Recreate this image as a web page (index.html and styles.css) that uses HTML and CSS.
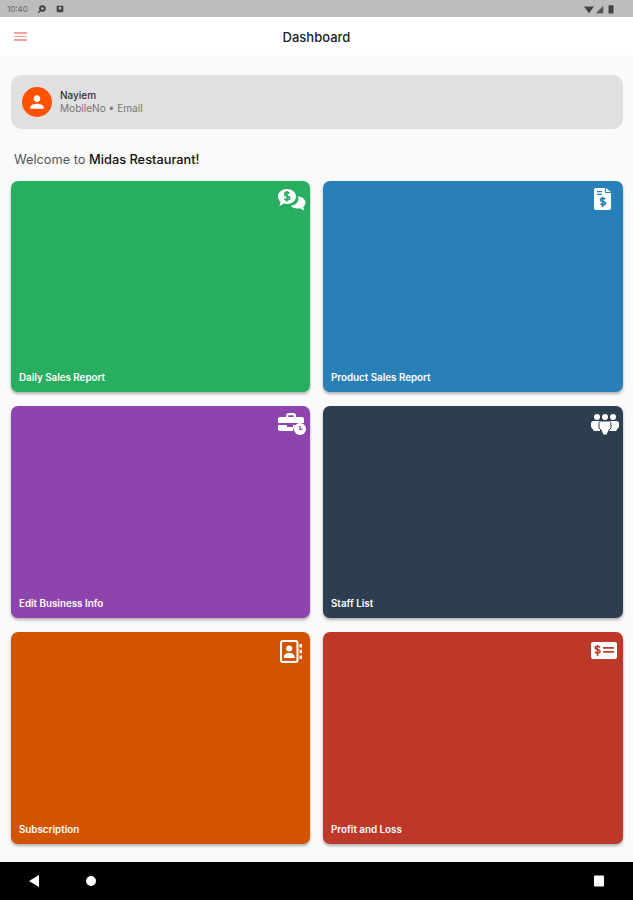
FILE: index.html
```html
<!DOCTYPE html>
<html lang="en">
<head>
    <meta charset="UTF-8">
    <meta name="viewport" content="width=device-width, initial-scale=1.0">
    <title>Dashboard</title>

    <link rel="stylesheet" href="styles.css">
</head>
<body>
    <div class="status-bar">
        <div class="status-left">
            <span class="status-time">10:40</span>
            <svg class="status-icon" viewBox="0 0 12 12"><circle cx="6.5" cy="5.5" r="4" fill="#444"/><circle cx="6.5" cy="5.5" r="1.5" fill="#bdbdbd"/><path d="M1 10l3-3 1 1-3 3z" fill="#444"/></svg>
            <svg class="status-icon" viewBox="0 0 12 12"><rect x="2" y="2" width="8" height="8" rx="1" fill="#444"/><rect x="4.5" y="3.5" width="3" height="3" fill="#bdbdbd"/></svg>
        </div>
        <div class="status-right">
            <svg class="status-icon" viewBox="0 0 12 12"><path d="M0 3h12L6 11z" fill="#444"/></svg>
            <svg class="status-icon" viewBox="0 0 12 12"><path d="M1 11L10 2v9z" fill="#555"/></svg>
            <svg class="status-icon" viewBox="0 0 12 12"><rect x="3" y="1.500" width="6" height="10" rx="1" fill="#444"/></svg>
        </div>
    </div>

    <header class="top-bar">
        <div class="menu-btn">
            <span></span>
            <span></span>
            <span></span>
        </div>
        <h1>Dashboard</h1>
    </header>

    <main class="content">
        <div class="user-card">
            <div class="avatar">
                <svg viewBox="0 0 24 24" width="16" height="16"><path fill="#fff" d="M12 12c2.800 0 5-2.200 5-5s-2.200-5-5-5-5 2.200-5 5 2.200 5 5 5zm0 2.500c-3.300 0-10 1.700-10 5V22h20v-2.500c0-3.300-6.700-5-10-5z"/></svg>
            </div>
            <div class="user-info">
                <div class="user-name">Nayiem</div>
                <div class="user-meta">MobileNo • Email</div>
            </div>
        </div>

        <p class="welcome">Welcome to <strong>Midas Restaurant!</strong></p>

        <div class="tile-grid">
            <div class="tile tile-green">
                <svg class="tile-icon icon-chat" width="30" height="24" viewBox="0 0 30 24">
                    <path fill="#fff" d="M10 1c5 0 9 3.200 9 7.500S15 16 10 16c-1 0-2-.1-3-.4L2.500 18l1-4C1.800 12.600 1 10.700 1 8.500 1 4.200 5 1 10 1z"/>
                    <path fill="#fff" d="M20.500 8.500c4.500 0 8 2.700 8 6 0 1.700-.8 3.200-2.200 4.300l.9 3.700-4.200-2.300c-.8.200-1.600.3-2.500.3-2.800 0-5.500-1-6.800-2.800 4.500-.3 7.800-3.400 7.800-7.200z"/>
                    <path fill="none" stroke="#27ae60" stroke-width="1.700" d="M12.500 5.500C12 4.700 11 4.300 10 4.300c-1.300 0-2.400.7-2.400 1.900 0 2.600 5 1.300 5 3.900 0 1.200-1.200 1.900-2.600 1.900-1.100 0-2.100-.5-2.600-1.300M10 3v10.500"/>
                </svg>
                <span class="tile-label">Daily Sales Report</span>
            </div>
            <div class="tile tile-blue">
                <svg class="tile-icon icon-doc" width="17" height="22" viewBox="0 0 17 22">
                    <path fill="#fff" d="M2 0h9v5h6v15a2 2 0 0 1-2 2H2a2 2 0 0 1-2-2V2a2 2 0 0 1 2-2z"/>
                    <path fill="#fff" d="M12 0l5 4h-5z"/>
                    <path fill="#2980b9" d="M3 3h5v1.300H3zM3 5.800h5v1.300H3z"/>
                    <path fill="none" stroke="#2980b9" stroke-width="1.700" d="M11.300 11.300c-.5-.7-1.400-1-2.500-1-1.400 0-2.300.6-2.300 1.600 0 2.200 5 1 5 3.300 0 1-1.100 1.600-2.500 1.600-1.100 0-2.100-.4-2.600-1.100M8.700 8.700v10.300"/>
                </svg>
                <span class="tile-label">Product Sales Report</span>
            </div>
            <div class="tile tile-purple">
                <svg class="tile-icon" width="28" height="22" viewBox="0 0 28 22">
                    <path fill="#fff" d="M8 4V2.500C8 1.100 9.100 0 10.500 0h5C16.900 0 18 1.100 18 2.500V4h6c1.100 0 2 .9 2 2v4H0V6c0-1.100.9-2 2-2h6zm2.200-1.800V4h5.600V2.200z"/>
                    <path fill="#fff" d="M0 12h9v2h6v-2h3.500c-2 1.300-3.300 3.500-3.300 6H2c-1.100 0-2-.9-2-2z"/>
                    <circle cx="22" cy="16" r="6" fill="#fff"/>
                    <path fill="none" stroke="#8e44ad" stroke-width="1.300" d="M22 13v3.300h2.500"/>
                </svg>
                <span class="tile-label">Edit Business Info</span>
            </div>
            <div class="tile tile-navy">
                <svg class="tile-icon" width="28" height="22" viewBox="0 0 28 22">
                    <circle cx="6" cy="4" r="3" fill="#fff"/>
                    <circle cx="14" cy="4" r="3" fill="#fff"/>
                    <circle cx="22" cy="4" r="3" fill="#fff"/>
                    <path fill="#fff" d="M2.500 8h7c1.400 0 2.500 1.100 2.500 2.500V17H9v-.5 1.500H3l-1-1.500L0 14v-3.500C0 9.100 1.100 8 2.500 8z"/>
                    <path fill="#fff" d="M18.500 8h7c1.400 0 2.500 1.100 2.500 2.500V14l-2 2.500-1 1.500h-6l-3-1v-6.500C16 9.100 17.100 8 18.500 8z"/>
                    <path fill="#fff" stroke="#2c3e50" stroke-width="1" d="M10.500 8h7c1.400 0 2.500 1.100 2.500 2.500V15l-2 2-2 5h-4l-2-5-2-2v-4.500C8 9.100 9.100 8 10.500 8z"/>
                </svg>
                <span class="tile-label">Staff List</span>
            </div>
            <div class="tile tile-orange">
                <svg class="tile-icon icon-contacts" width="22" height="23" viewBox="0 0 22 23">
                    <rect x="1" y="1" width="16.500" height="21" rx="2" fill="none" stroke="#fff" stroke-width="2"/>
                    <circle cx="9.200" cy="8.500" r="3" fill="#fff"/>
                    <path fill="#fff" d="M3.800 17c0-2.500 2.500-4 5.400-4s5.400 1.500 5.400 4v1H3.800z"/>
                    <path fill="#fff" d="M19.500 4H22v3.500h-2.500zM19.500 9.700H22v3.500h-2.500zM19.500 15.500H22V19h-2.500z"/>
                </svg>
                <span class="tile-label">Subscription</span>
            </div>
            <div class="tile tile-red">
                <svg class="tile-icon icon-bill" width="26" height="17" viewBox="0 0 26 17">
                    <rect width="26" height="17" rx="2" fill="#fff"/>
                    <path fill="none" stroke="#bd3829" stroke-width="1.500" d="M9 5.500C8.500 4.800 7.600 4.300 6.500 4.300c-1.300 0-2.300.6-2.300 1.700 0 2.200 4.900 1 4.900 3.300 0 1-1.100 1.700-2.500 1.700-1.100 0-2.100-.5-2.600-1.200M6.500 3v11"/>
                    <path fill="#bd3829" d="M12 5h11v1.700H12zM12 9h11v1.700H12z"/>
                </svg>
                <span class="tile-label">Profit and Loss</span>
            </div>
        </div>
    </main>

    <nav class="nav-bar">
        <div class="nav-left">
            <svg width="12" height="14" viewBox="0 0 12 14"><path d="M11 1v12L1 7z" fill="#fff"/></svg>
            <svg width="12" height="12" viewBox="0 0 12 12"><circle cx="6" cy="6" r="5" fill="#fff"/></svg>
        </div>
        <svg width="12" height="12" viewBox="0 0 12 12"><rect x="1" y="0.500" width="10" height="11" rx="1" fill="#fff"/></svg>
    </nav>
</body>
</html>
```

FILE: styles.css
```css
* {
    margin: 0;
    padding: 0;
    box-sizing: border-box;
}

body {
    font-family: Inter, 'Open Sans', Arial, sans-serif;
    background: #fafafa;
    height: 900px;
    display: flex;
    flex-direction: column;
    overflow: hidden;
}

.status-bar {
    height: 17px;
    background: #bdbdbd;
    display: flex;
    align-items: center;
    justify-content: space-between;
    padding: 0 17px 0 7px;
    flex-shrink: 0;
}

.status-left,
.status-right {
    display: flex;
    align-items: center;
    gap: 1px;
}

.status-left {
    gap: 8px;
}

.status-time {
    font-size: 8px;
    color: #666;
    margin-right: 1px;
}

.status-icon {
    width: 10px;
    height: 10px;
}

.top-bar {
    height: 38px;
    background: #fff;
    display: flex;
    align-items: center;
    justify-content: center;
    padding-top: 2px;
    position: relative;
    flex-shrink: 0;
}

.top-bar h1 {
    font-size: 13px;
    font-weight: 500;
    color: #222;
}

.menu-btn {
    position: absolute;
    left: 14px;
    top: 15px;
    width: 13px;
    display: flex;
    flex-direction: column;
    gap: 2px;
}

.menu-btn span {
    height: 1.500px;
    background: #f9a097;
}

.content {
    flex: 1;
    padding: 20px 10px 18px 11px;
    display: flex;
    flex-direction: column;
}

.user-card {
    height: 54px;
    background: #e0e0e0;
    border-radius: 10px;
    display: flex;
    align-items: center;
    padding-left: 11px;
    gap: 8px;
    flex-shrink: 0;
}

.avatar {
    width: 30px;
    height: 30px;
    border-radius: 50%;
    background: #ff5100;
    display: flex;
    align-items: center;
    justify-content: center;
}

.user-name {
    font-size: 10px;
    font-weight: 500;
    color: #333;
    line-height: 13px;
}

.user-meta {
    font-size: 10.100px;
    color: #777;
    line-height: 13px;
}

.welcome {
    font-size: 12.800px;
    color: #555;
    margin: 23px 0 13px 3px;
    line-height: 16px;
}

.welcome strong {
    font-weight: 500;
    color: #111;
}

.tile-grid {
    flex: 1;
    display: grid;
    grid-template-columns: 299px 300px;
    grid-template-rows: 211px 212px 212px;
    column-gap: 13px;
    row-gap: 14px;
}

.tile {
    border-radius: 7px;
    box-shadow: 0 2px 3px rgba(0, 0, 0, 0.3);
    padding: 7px 4px 9px 8px;
    display: flex;
    flex-direction: column;
    justify-content: space-between;
}

.tile-icon {
    align-self: flex-end;
}

.icon-chat {
    margin-right: -1px;
}

.icon-doc {
    margin-right: 8px;
}

.icon-contacts {
    margin: 1px 4px 0 0;
}

.icon-bill {
    margin: 3px 2px 0 0;
}

.tile-label {
    font-size: 9.800px;
    font-weight: 600;
    color: #fff;
}

.tile-green { background: #27ae60; }
.tile-blue { background: #2980b9; }
.tile-purple { background: #8e44ad; }
.tile-navy { background: #2c3e50; }
.tile-orange { background: #d35400; }
.tile-red { background: #bd3829; }

.nav-bar {
    height: 38px;
    background: #000;
    display: flex;
    align-items: center;
    justify-content: space-between;
    padding: 0 28px;
    flex-shrink: 0;
}

.nav-left {
    display: flex;
    align-items: center;
    gap: 45px;
}
```
